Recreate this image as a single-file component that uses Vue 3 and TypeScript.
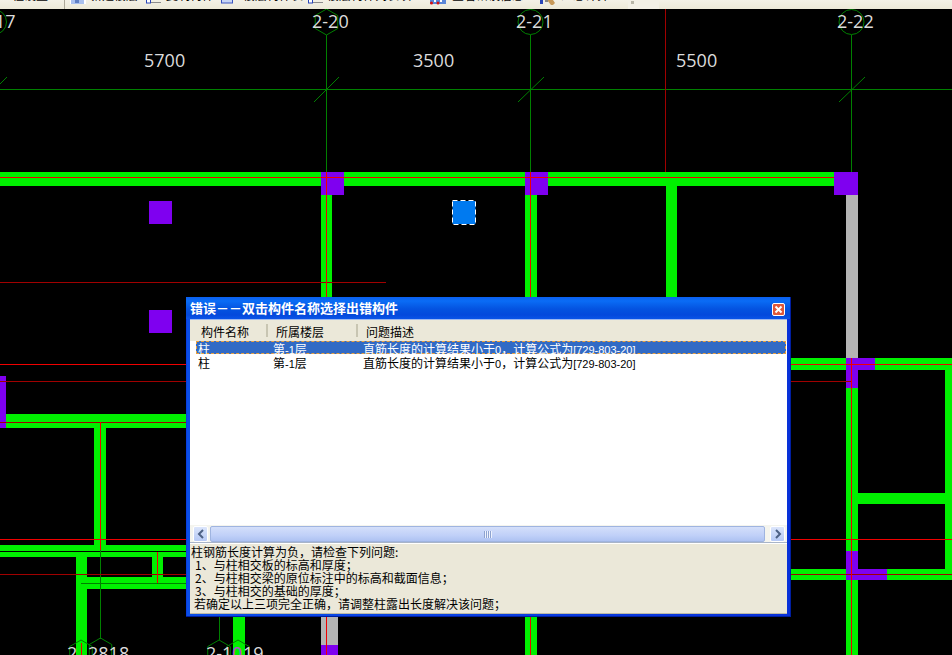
<script setup lang="ts">
// Rectangles of the floor plan: walls, columns, grey slab strips
type Box = [number, number, number, number]

const WALLS: Box[] = [
  [0, 172, 834, 14],
  [321, 195, 11, 110],
  [525, 195, 12, 110],
  [666, 186, 11, 120],
  [6, 414, 180, 14],
  [94, 428, 12, 117],
  [0, 545, 186, 6],
  [0, 552, 186, 5],
  [76, 557, 11, 98],
  [152, 557, 11, 20],
  [87, 577, 99, 12],
  [233, 616, 12, 39],
  [525, 616, 12, 39],
  [791, 358, 161, 12],
  [945, 370, 7, 199],
  [846, 388, 12, 163],
  [858, 493, 87, 11],
  [791, 569, 161, 11],
  [846, 580, 12, 75],
]

const COLUMNS: Box[] = [
  [321, 172, 23, 23],
  [525, 172, 23, 23],
  [834, 172, 24, 23],
  [149, 201, 23, 23],
  [149, 310, 23, 23],
  [0, 376, 6, 52],
  [846, 358, 29, 12],
  [846, 370, 12, 18],
  [846, 551, 12, 18],
  [846, 569, 41, 11],
  [321, 645, 17, 10],
]

const GREY: Box[] = [
  [846, 195, 12, 163],
  [321, 616, 17, 29],
]

// Thin lines: x1, y1, x2, y2
type Seg = [number, number, number, number]

const GRID: Seg[] = [
  [0, 89.5, 952, 89.5],
  [326.5, 35, 326.5, 172],
  [530.5, 35, 530.5, 172],
  [851.5, 35, 851.5, 172],
  [100.5, 550, 100.5, 639],
  [219.5, 616, 219.5, 640],
  [81, 583.5, 186, 583.5],
  [0, 84, 7, 77],
  [314, 102, 339, 77],
  [518, 102, 544, 77],
  [839, 102, 865, 77],
]

const RED: Seg[] = [
  [0, 177.5, 834, 177.5],
  [326.5, 172, 326.5, 305],
  [530.5, 172, 530.5, 305],
  [0, 364.5, 186, 364.5],
  [791, 364.5, 952, 364.5],
  [0, 539.5, 186, 539.5],
  [791, 539.5, 952, 539.5],
  [100.5, 422, 100.5, 550],
  [157.5, 552, 157.5, 583],
  [851.5, 358, 851.5, 655],
  [326.5, 616, 326.5, 655],
  [530.5, 616, 530.5, 655],
  [81.5, 643, 81.5, 655],
]

const DARK_RED: Seg[] = [
  [665.5, 9, 665.5, 172],
  [0, 282.5, 386, 282.5],
  [0, 381.5, 186, 381.5],
  [791, 381.5, 851, 381.5],
  [0, 422.5, 186, 422.5],
  [0, 574.5, 186, 574.5],
  [791, 574.5, 952, 574.5],
]

const HEXES: [number, number][] = [
  [326.5, 22],
  [81, 653],
  [100.5, 651],
  [219, 653],
  [238, 653],
]

// The other axis bubbles come out almost round in the reference
const RINGS: [number, number][] = [
  [-6, 22],
  [530.5, 22],
  [851.5, 22],
]

function hexPoints(cx: number, cy: number): string {
  const pts: string[] = []
  for (let i = 0; i < 6; i++) {
    const a = (Math.PI / 3) * i - Math.PI / 2
    pts.push(`${cx + 13 * Math.cos(a)},${cy + 13 * Math.sin(a)}`)
  }
  return pts.join(' ')
}

const LABELS: { x: number; y: number; t: string }[] = [
  { x: -5, y: 28, t: '17' },
  { x: 144, y: 67, t: '5700' },
  { x: 413, y: 67, t: '3500' },
  { x: 676, y: 67, t: '5500' },
  { x: 312, y: 28, t: '2-20' },
  { x: 516, y: 28, t: '2-21' },
  { x: 837, y: 28, t: '2-22' },
  { x: 67, y: 660, t: '2' },
  { x: 88, y: 660, t: '2818' },
  { x: 206, y: 660, t: '2-1' },
  { x: 243, y: 660, t: '19' },
]

const TOOLS = [
  { w: 76, gap: 4, icon: 'plan', t: '新建楼层' },
  { w: 75, gap: 4, icon: 'line', t: '复制构件' },
  { w: 87, gap: 6, icon: 'box', t: '楼层构件表' },
  { w: 122, gap: 3, icon: 'line', t: '楼层构件列表项' },
  { w: 110, gap: 6, icon: 'dots', t: '查看错误信息' },
  { w: 88, gap: 5, icon: 'pen', t: '汇总计算' },
]

const ROWS = [
  { name: '柱', selected: true },
  { name: '柱', selected: false },
]

const NOTES = [
  { cls: 'n0', t: '柱钢筋长度计算为负，请检查下列问题:' },
  { cls: 'n1', t: '1、与柱相交板的标高和厚度；' },
  { cls: 'n1', t: '2、与柱相交梁的原位标注中的标高和截面信息；' },
  { cls: 'n1', t: '3、与柱相交的基础的厚度；' },
  { cls: 'n2', t: '若确定以上三项完全正确，请调整柱露出长度解决该问题；' },
]
</script>

<template>
  <div class="screen">
    <div class="toolbar">
      <div class="tool-first"><span class="tool-text">工程设置</span></div>
      <div v-for="(tool, i) in TOOLS" :key="i" class="tool" :style="{ width: tool.w + 'px', gap: tool.gap + 'px' }">
        <svg class="tool-icon" width="16" height="9" viewBox="0 0 16 9">
          <g v-if="tool.icon === 'plan'">
            <rect width="16" height="4" fill="#fff" />
            <rect x="1" width="13" height="4" fill="#a9c0ee" />
            <rect x="5" y="0" width="4" height="3" fill="#5f7fc4" />
          </g>
          <g v-else-if="tool.icon === 'line'">
            <rect x="0.5" y="-1" width="4" height="4" fill="#fff" stroke="#2a46b8" />
            <rect x="5" y="2" width="10" height="1" fill="#8c8c8c" />
          </g>
          <g v-else-if="tool.icon === 'box'">
            <rect x="0.5" y="-1" width="11" height="4" fill="#c8d6f6" stroke="#3a55c0" />
          </g>
          <g v-else-if="tool.icon === 'dots'">
            <rect width="16" height="4" fill="#5a86d8" />
            <rect x="4" y="0" width="2" height="2" fill="#fff" />
            <rect x="10" y="0" width="2" height="2" fill="#fff" />
            <circle cx="1.5" cy="3" r="1.5" fill="#d81010" />
            <circle cx="8" cy="3" r="1.5" fill="#d81010" />
          </g>
          <g v-else>
            <rect x="0" y="0" width="3" height="4" fill="#2a46b8" />
            <path d="M7 0h6l2 3-2 2h-2z" fill="#c89a5a" />
            <rect x="5" y="0" width="3" height="2" fill="#8a8a8a" />
          </g>
        </svg>
        <span class="tool-text">{{ tool.t }}</span>
      </div>
      <div class="tool-end"><i></i></div>
    </div>

    <svg class="plan" width="952" height="655" viewBox="0 0 952 655">
      <rect v-for="(b, i) in WALLS" :key="'w' + i" :x="b[0]" :y="b[1]" :width="b[2]" :height="b[3]" fill="#00f000" />
      <rect v-for="(b, i) in GREY" :key="'g' + i" :x="b[0]" :y="b[1]" :width="b[2]" :height="b[3]" fill="#b4b4b4" />
      <rect v-for="(b, i) in COLUMNS" :key="'c' + i" :x="b[0]" :y="b[1]" :width="b[2]" :height="b[3]" fill="#7f00f0" />
      <rect x="452.5" y="201" width="23" height="23" fill="#007af0" />
      <rect x="452.5" y="200.5" width="23" height="24" fill="none" stroke="#fff" stroke-dasharray="5 3" />
      <line v-for="(s, i) in GRID" :key="'l' + i" :x1="s[0]" :y1="s[1]" :x2="s[2]" :y2="s[3]" stroke="#008000" />
      <line v-for="(s, i) in DARK_RED" :key="'d' + i" :x1="s[0]" :y1="s[1]" :x2="s[2]" :y2="s[3]" stroke="#a00000" />
      <line v-for="(s, i) in RED" :key="'r' + i" :x1="s[0]" :y1="s[1]" :x2="s[2]" :y2="s[3]" stroke="#f00000" />
      <polygon
        v-for="(h, i) in HEXES"
        :key="'h' + i"
        :points="hexPoints(h[0], h[1])"
        fill="none"
        stroke="#008000"
      />
      <circle v-for="(h, i) in RINGS" :key="'o' + i" :cx="h[0]" :cy="h[1]" r="12.5" fill="none" stroke="#008000" />
      <text v-for="(l, i) in LABELS" :key="'t' + i" :x="l.x" :y="l.y" class="label">{{ l.t }}</text>
      <text x="232" y="660" class="label label-pink">0</text>
    </svg>

    <section class="dialog">
      <header class="titlebar">
        <span class="title">错误－－双击构件名称选择出错构件</span>
        <span class="close">
          <svg width="11" height="11" viewBox="0 0 11 11">
            <path d="M2.5 2.5l6 6M8.5 2.5l-6 6" stroke="#fff" stroke-width="2" />
          </svg>
        </span>
      </header>

      <div class="client">
        <div class="list">
          <div class="list-head">
            <span class="col-a">构件名称</span>
            <span class="col-b">所属楼层</span>
            <span class="col-c">问题描述</span>
          </div>
          <div class="rows">
            <div v-for="(row, i) in ROWS" :key="i" class="row" :class="{ selected: row.selected }">
              <span class="cell-a">{{ row.name }}</span>
              <span class="cell-b">第<span class="latin">-1</span>层</span>
              <span class="cell-c">直筋长度的计算结果小于<span class="latin">0</span>，计算公式为<span class="latin">[729-803-20]</span></span>
            </div>
          </div>
          <div class="scrollbar">
            <span class="sb-btn">
              <svg width="8" height="10" viewBox="0 0 8 10"><path d="M6 1L2 5l4 4" fill="none" stroke="#4d6185" stroke-width="2" /></svg>
            </span>
            <span class="sb-thumb"><i class="grip"></i></span>
            <span class="sb-btn">
              <svg width="8" height="10" viewBox="0 0 8 10"><path d="M2 1l4 4-4 4" fill="none" stroke="#4d6185" stroke-width="2" /></svg>
            </span>
          </div>
        </div>
        <div class="notes">
          <div v-for="(n, i) in NOTES" :key="i" class="note" :class="n.cls">{{ n.t }}</div>
        </div>
      </div>
    </section>
  </div>
</template>

<style>
html,
body {
  margin: 0;
  background: #000;
}
</style>

<style scoped>
.screen {
  position: relative;
  width: 952px;
  height: 655px;
  overflow: hidden;
  background: #000;
  font-family: "Noto Sans CJK SC", "Liberation Sans", sans-serif;
  font-size: 12px;
  color: #000;
}
.latin {
  font-family: "Liberation Sans", sans-serif;
  font-size: 11px;
}

.toolbar {
  position: absolute;
  top: 0;
  left: 0;
  z-index: 1;
  display: flex;
  width: 100%;
  height: 9px;
  overflow: hidden;
  background: linear-gradient(180deg, #f3f1e6, #ece9d8);
}
.tool-first {
  width: 64px;
  height: 9px;
  margin-right: 6px;
  box-shadow: 1px 0 0 #aca899;
  flex: none;
}
.tool {
  display: flex;
  height: 9px;
  flex: none;
}
.tool-icon {
  flex: none;
}
.tool-text {
  display: block;
  margin-top: -14px;
  white-space: nowrap;
  line-height: 17px;
}
.tool-end {
  width: 31px;
  height: 9px;
  flex: none;
  background: #f2f0e6;
}
.tool-end i {
  display: block;
  width: 3px;
  height: 3px;
  margin: 1px 0 0 3px;
  background: #b8b6a8;
}

.plan {
  display: block;
}
.label {
  font-family: "Open Sans", sans-serif;
  font-size: 18px;
  fill: #dcdcdc;
}
.label-pink {
  fill: #c040e0;
}

.dialog {
  position: absolute;
  left: 186px;
  top: 297px;
  width: 605px;
  height: 320px;
  box-sizing: border-box;
  display: flex;
  flex-direction: column;
  padding: 0 3px 2px 4px;
  background: linear-gradient(90deg, #0831d9, #0a4ee8 1px, #0a4ee8 3px, #0831d9);
  border-right: 1px solid #001ea0;
  border-bottom: 1px solid #001ea0;
}
.titlebar {
  display: flex;
  align-items: center;
  justify-content: space-between;
  height: 22px;
  flex: none;
  margin: 0 -3px 0 -4px;
  padding: 0 5px 0 4px;
  background: linear-gradient(180deg, #0a5ff0 0, #0a6cf5 4px, #0453e0 12px, #0449dc 18px, #0a54e8 100%);
}
.title {
  color: #fff;
  font-size: 13px;
  font-weight: 700;
  line-height: 22px;
}
.close {
  display: flex;
  width: 11px;
  height: 11px;
  margin-top: 3px;
  border: 1px solid #fff;
  border-radius: 2px;
  background: #e0583a;
}

.client {
  flex: 1;
  min-height: 0;
  display: flex;
  flex-direction: column;
  border-top: 1px solid #9db8f0;
  border-bottom: 1px solid #bdbaa8;
  background: #ebe8d9;
}
.list {
  flex: 1;
  min-height: 0;
  display: flex;
  flex-direction: column;
  background: #fff;
}
.list-head {
  position: relative;
  height: 21px;
  flex: none;
  background: #ebe8d9;
  line-height: 21px;
}
.list-head span {
  position: absolute;
  top: 1px;
  white-space: nowrap;
}
.col-a {
  left: 11px;
}
.col-b {
  left: 86px;
}
.col-c {
  left: 176px;
}
.col-b::before,
.col-c::before {
  content: "";
  position: absolute;
  top: 3px;
  left: -10px;
  width: 2px;
  height: 13px;
  background: #c8c5b2;
}

.rows {
  flex: 1;
  padding: 0 1px 0 6px;
}
.row {
  position: relative;
  display: flex;
  height: 13px;
  margin-bottom: 1px;
  line-height: 13px;
  white-space: nowrap;
  box-sizing: border-box;
}
.row.selected {
  color: #fff;
  background: #316ac5;
  outline: 1px dashed #e8a040;
  outline-offset: -1px;
}
.row span {
  position: relative;
  top: 1px;
}
.row .latin {
  top: 0;
}
.cell-a {
  width: 77px;
  padding-left: 2px;
  box-sizing: border-box;
  flex: none;
}
.cell-b {
  width: 90px;
  flex: none;
}

.scrollbar {
  display: flex;
  align-items: stretch;
  gap: 2px;
  height: 16px;
  flex: none;
  padding: 1px 2px 0 3px;
  margin-bottom: 1px;
  border-bottom: 1px solid #a8b4c8;
  background: #f4f4ee;
}
.sb-btn {
  display: flex;
  align-items: center;
  justify-content: center;
  width: 15px;
  flex: none;
  border: 1px solid #fff;
  border-radius: 2px;
  background: linear-gradient(180deg, #dbe5fb, #b6c9f5);
  box-sizing: border-box;
}
.sb-thumb {
  flex: 1;
  display: flex;
  align-items: center;
  justify-content: center;
  margin-right: 3px;
  border: 1px solid #9fb4e0;
  border-radius: 2px;
  background: linear-gradient(180deg, #d4dffa, #c0d0f8 60%, #aec2f2);
  box-sizing: border-box;
}
.grip {
  width: 8px;
  height: 7px;
  background: repeating-linear-gradient(90deg, #8ea3d0 0 1px, #eef2fd 1px 2px);
}

.notes {
  flex: none;
  height: 69px;
  padding-top: 1px;
  box-sizing: border-box;
  white-space: pre;
}
.note {
  height: 13px;
  line-height: 13px;
}
.n0 {
  padding-left: 1px;
}
.n1 {
  padding-left: 5px;
}
.n2 {
  padding-left: 4px;
}
</style>
